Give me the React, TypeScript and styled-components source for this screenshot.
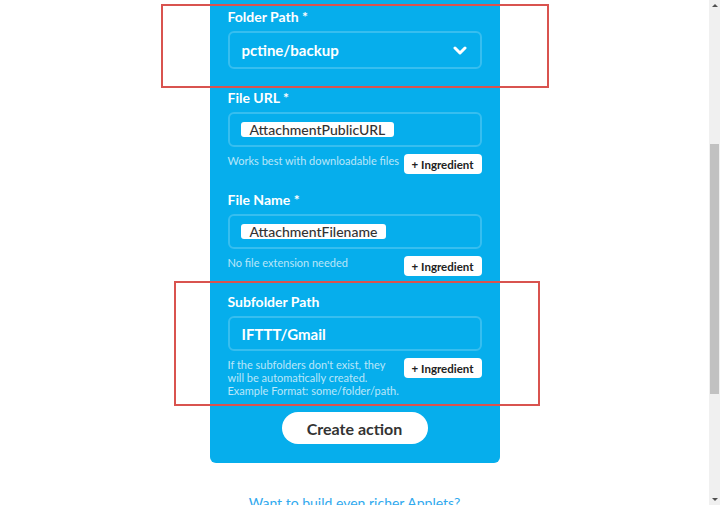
import styled, { createGlobalStyle } from 'styled-components';

const GlobalStyle = createGlobalStyle`
  html, body {
    margin: 0;
    padding: 0;
    background: #ffffff;
  }
  body {
    font-family: Lato, "Open Sans", "Liberation Sans", sans-serif;
  }
`;

const Page = styled.div`
  position: relative;
  display: flex;
  width: 720px;
  height: 505px;
  overflow: hidden;
  background: #ffffff;
`;

const Main = styled.main`
  flex: 1;
  display: flex;
  flex-direction: column;
  align-items: center;
`;

const Card = styled.section`
  width: 290px;
  box-sizing: border-box;
  padding: 8px 18px 19px;
  background: #06aeec;
  border-radius: 0 0 6px 6px;
  display: flex;
  flex-direction: column;
`;

const Group = styled.div<{ $last?: boolean }>`
  display: flex;
  flex-direction: column;
  margin-bottom: ${(p) => (p.$last ? '15px' : '17px')};
`;

const Label = styled.label`
  font-size: 14px;
  font-weight: 700;
  line-height: 18px;
  color: #ffffff;
  margin-bottom: 5px;
`;

const Field = styled.div<{ $tall?: boolean }>`
  box-sizing: border-box;
  height: ${(p) => (p.$tall ? '38px' : '35px')};
  margin-bottom: ${(p) => (p.$tall ? '3px' : '0')};
  border: 2px solid rgba(255, 255, 255, 0.2);
  border-radius: 6px;
  display: flex;
  align-items: center;
  justify-content: space-between;
  padding: 0 13px 0 12px;
`;

const FieldText = styled.span`
  font-size: 15px;
  font-weight: 700;
  color: #ffffff;
`;

const Pill = styled.span`
  display: inline-block;
  height: 15px;
  line-height: 15px;
  padding: 0 9px;
  margin-left: -1px;
  background: #ffffff;
  border-radius: 3px;
  color: #333333;
  font-size: 14px;
  font-weight: 500;
`;

const HelpRow = styled.div`
  display: flex;
  justify-content: space-between;
  align-items: flex-start;
  margin-top: 7px;
`;

const Help = styled.p`
  margin: 0;
  font-size: 11px;
  line-height: 13px;
  color: rgba(255, 255, 255, 0.72);
`;

const IngredientButton = styled.button`
  flex-shrink: 0;
  height: 20px;
  padding: 0 8px;
  border: none;
  border-radius: 4px;
  background: #ffffff;
  color: #222222;
  font-family: inherit;
  font-size: 11.5px;
  font-weight: 700;
  cursor: pointer;
`;

const CreateButton = styled.button`
  align-self: center;
  width: 146px;
  height: 32px;
  border: none;
  border-radius: 16px;
  background: #ffffff;
  color: #333333;
  font-family: inherit;
  font-size: 16px;
  font-weight: 700;
  cursor: pointer;
`;

const MoreLink = styled.a`
  margin-top: 31px;
  font-size: 14px;
  line-height: 18px;
  color: #30a9ee;
  text-decoration: none;
`;

const Scrollbar = styled.aside`
  width: 11px;
  background: #f0f0f0;
  display: flex;
  flex-direction: column;
  align-items: center;
`;

const Arrow = styled.div<{ $down?: boolean }>`
  height: 11px;
  display: flex;
  align-items: center;
  justify-content: center;
  &::before {
    content: '';
    border-left: 3px solid transparent;
    border-right: 3px solid transparent;
    ${(p) =>
      p.$down ? 'border-top: 3px solid #505050;' : 'border-bottom: 3px solid #505050;'}
  }
`;

const Track = styled.div`
  flex: 1;
  display: flex;
  flex-direction: column;
`;

const Thumb = styled.div`
  margin-top: 133px;
  width: 9px;
  height: 250px;
  background: #c1c1c1;
`;

const Highlight = styled.div<{ $x: number; $y: number; $w: number; $h: number }>`
  position: absolute;
  left: ${(p) => p.$x}px;
  top: ${(p) => p.$y}px;
  width: ${(p) => p.$w}px;
  height: ${(p) => p.$h}px;
  box-sizing: border-box;
  border: 2px solid #d9534f;
  pointer-events: none;
`;

const Chevron = () => (
  <svg width="14" height="9" viewBox="0 0 14 9">
    <polyline
      points="2,2 7,7 12,2"
      fill="none"
      stroke="#ffffff"
      strokeWidth="3"
      strokeLinecap="round"
      strokeLinejoin="round"
    />
  </svg>
);

export default function App() {
  return (
    <>
      <GlobalStyle />
      <Page>
        <Main>
          <Card>
            <Group>
              <Label>Folder Path *</Label>
              <Field $tall>
                <FieldText>pctine/backup</FieldText>
                <Chevron />
              </Field>
            </Group>

            <Group>
              <Label>File URL *</Label>
              <Field>
                <Pill>AttachmentPublicURL</Pill>
              </Field>
              <HelpRow>
                <Help>Works best with downloadable files</Help>
                <IngredientButton>+ Ingredient</IngredientButton>
              </HelpRow>
            </Group>

            <Group>
              <Label>File Name *</Label>
              <Field>
                <Pill>AttachmentFilename</Pill>
              </Field>
              <HelpRow>
                <Help>No file extension needed</Help>
                <IngredientButton>+ Ingredient</IngredientButton>
              </HelpRow>
            </Group>

            <Group $last>
              <Label>Subfolder Path</Label>
              <Field>
                <FieldText>IFTTT/Gmail</FieldText>
              </Field>
              <HelpRow>
                <Help>
                  If the subfolders don't exist, they
                  <br />
                  will be automatically created.
                  <br />
                  Example Format: some/folder/path.
                </Help>
                <IngredientButton>+ Ingredient</IngredientButton>
              </HelpRow>
            </Group>

            <CreateButton>Create action</CreateButton>
          </Card>
          <MoreLink href="#">Want to build even richer Applets?</MoreLink>
        </Main>
        <Scrollbar>
          <Arrow />
          <Track>
            <Thumb />
          </Track>
          <Arrow $down />
        </Scrollbar>
        <Highlight $x={161} $y={4} $w={388} $h={84} />
        <Highlight $x={174} $y={281} $w={366} $h={125} />
      </Page>
    </>
  );
}
